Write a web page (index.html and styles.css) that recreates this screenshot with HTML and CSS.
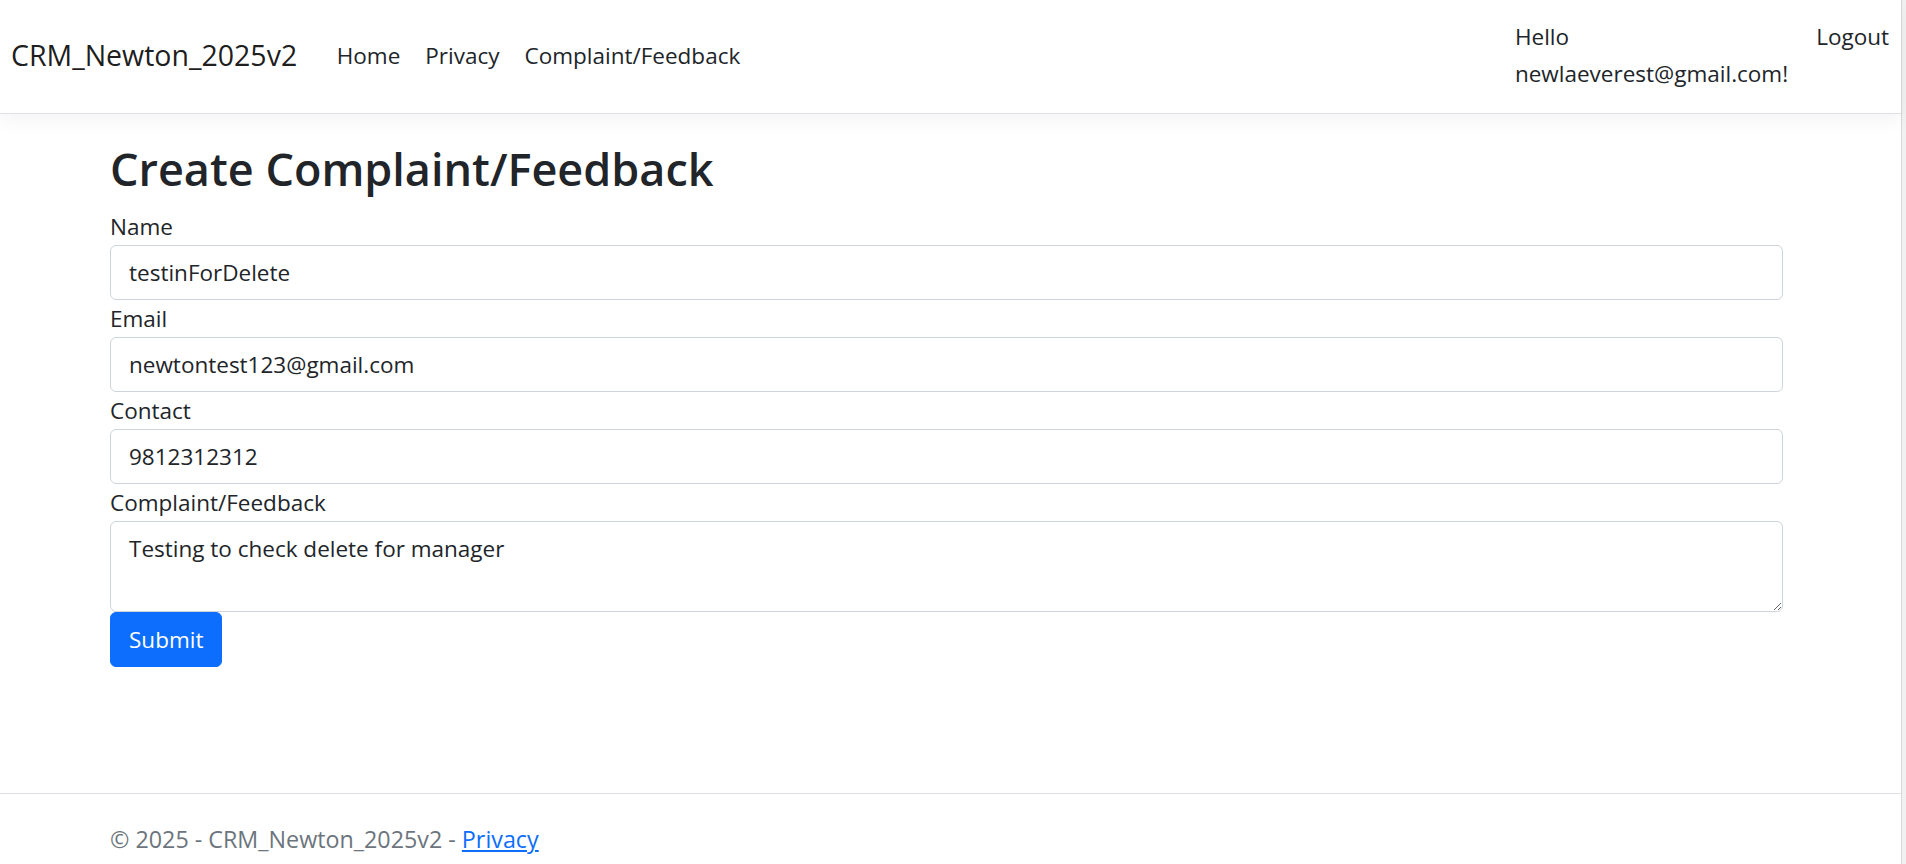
FILE: index.html
```html
<!DOCTYPE html>
<html lang="en">
<head>
<meta charset="utf-8">
<title>Create Complaint/Feedback - CRM_Newton_2025v2</title>
<link rel="stylesheet" href="styles.css">
</head>
<body>
<div class="page">
  <header class="navbar">
    <a class="brand" href="#">CRM_Newton_2025v2</a>
    <ul class="nav nav-main">
      <li><a class="nav-link" href="#">Home</a></li>
      <li><a class="nav-link" href="#">Privacy</a></li>
      <li><a class="nav-link" href="#">Complaint/Feedback</a></li>
    </ul>
    <ul class="nav nav-user">
      <li><a class="nav-link hello" href="#">Hello newlaeverest@gmail.com!</a></li>
      <li><a class="nav-link" href="#">Logout</a></li>
    </ul>
  </header>
  <main class="main">
    <div class="container">
      <h1 class="title">Create Complaint/Feedback</h1>
      <form class="form">
        <label class="form-label" for="name">Name</label>
        <input class="form-control" id="name" type="text" value="testinForDelete">
        <label class="form-label" for="email">Email</label>
        <input class="form-control" id="email" type="text" value="newtontest123@gmail.com">
        <label class="form-label" for="contact">Contact</label>
        <input class="form-control" id="contact" type="text" value="9812312312">
        <label class="form-label" for="complaint">Complaint/Feedback</label>
        <textarea class="form-control form-textarea" id="complaint">Testing to check delete for manager</textarea>
        <div class="actions"><button class="btn" type="button">Submit</button></div>
      </form>
    </div>
  </main>
  <footer class="footer">
    <div class="container">© 2025 - CRM_Newton_2025v2 - <a class="footer-link" href="#">Privacy</a></div>
  </footer>
</div>
<div class="scrolltrack"></div>
</body>
</html>
```
FILE: styles.css
```css
html, body {
  margin: 0;
  height: 864px;
  overflow: hidden;
}
body {
  display: flex;
  font-family: "Open Sans", "Noto Sans", sans-serif;
  font-size: 22.5px;
  line-height: 37px;
  color: #212529;
  background: #fff;
}
.page {
  flex: 1;
  min-width: 0;
  height: 884px;
  display: flex;
  flex-direction: column;
}
.scrolltrack {
  width: 4px;
  border-left: 1px solid #d9d9d9;
  background: #f1f1f1;
}
.navbar {
  position: relative;
  z-index: 1;
  display: flex;
  align-items: flex-start;
  height: 114px;
  box-sizing: border-box;
  padding: 6px 0 9px 11px;
  border-bottom: 1px solid #dee2e6;
  box-shadow: 0 6px 18px rgba(0, 0, 0, .05);
  background: #fff;
}
.brand {
  align-self: center;
  font-size: 28.5px;
  line-height: 45px;
  color: rgba(0, 0, 0, .9);
  text-decoration: none;
  margin-right: 27px;
}
.nav {
  list-style: none;
  margin: 0;
  padding: 0;
  display: flex;
}
.nav-main {
  align-self: center;
  flex: 1;
}
.nav-main .nav-link {
  padding: 12px 12.5px;
}
.nav-link {
  display: block;
  padding: 12px;
  color: #212529;
  text-decoration: none;
}
.hello {
  width: min-content;
  padding-right: 16px;
}
.main {
  flex: 1;
  padding-top: 28px;
}
.container {
  width: 1673px;
  margin-left: 110px;
}
.title {
  font-size: 45px;
  font-weight: 600;
  line-height: 54px;
  margin: 0 0 12px;
}
.form-label {
  display: block;
  line-height: 37px;
}
.form-control {
  display: block;
  width: 100%;
  box-sizing: border-box;
  height: 55px;
  margin: 0;
  padding: 8px 18px;
  font: inherit;
  line-height: 37px;
  color: #212529;
  background: #fff;
  border: 1px solid #ced4da;
  border-radius: 6px;
  outline: none;
}
.form-textarea {
  height: 91px;
  resize: vertical;
}
.actions {
  display: flex;
}
.btn {
  font: inherit;
  line-height: 37px;
  padding: 8px 18px;
  color: #fff;
  background: #0d6efd;
  border: 1px solid #0d6efd;
  border-radius: 6px;
}
.footer {
  border-top: 1px solid #dee2e6;
  line-height: 90px;
  font-size: 23.3px;
  color: #6c757d;
  white-space: nowrap;
}
.footer-link {
  color: #0d6efd;
}
```
